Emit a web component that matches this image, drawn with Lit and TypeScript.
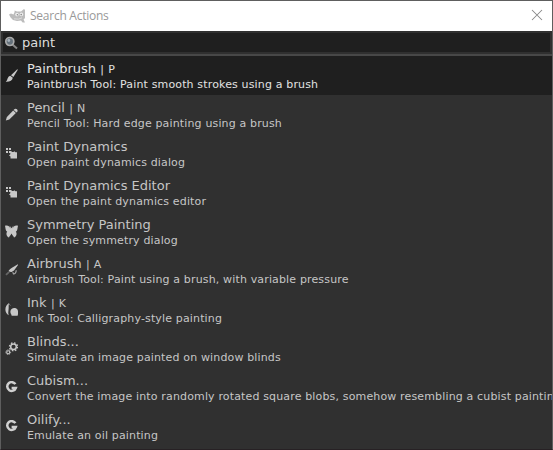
import { LitElement, html, css, svg } from "lit";
import { customElement } from "lit/decorators.js";

const icons: Record<string, unknown> = {
  brush: svg`<path d="M12.3 .2 L12.8 .8 L8.4 8 L6 6.2 Z"/><path d="M5.2 6.8 L7.8 8.8 C7.4 11.6 4.4 13 .8 12.7 C2.8 11.6 2.2 7.6 5.2 6.8Z"/>`,
  pencil: svg`<path d="M8.2 2.4 L10.9 5.1 L4.3 11.4 L.8 12.6 L1.9 9Z"/><path d="M9 1.6 C10.8 -.4 14 2 12 4.1 L11.5 4.6 L8.7 1.9Z"/>`,
  dynamics: svg`<path d="M1 1h2v2H1zM4 1h2v2H4zM1 4h2v2H1z"/><path d="M4 4 H6 L7.2 5 H8.5 L9.3 4.3 L10.4 5.2 H12 V11.5 H5.5 V9.4 L4 8.6 L5.3 7.2 V6 H4Z"/>`,
  butterfly: svg`<path d="M0 .8 C3-.1 5 1.8 5.7 4 L4.5.6 L6.5 3.2 L8.5.6 L7.3 4 C8 1.8 10-.1 13 .8 C12.4 3 12.7 5.8 10.8 6.8 C12.4 8.2 11.4 11.8 9 12.6 C8.6 11.2 7.4 10.5 6.5 8.6 C5.6 10.5 4.4 11.2 4 12.6 C1.6 11.8.6 8.2 2.2 6.8 C.3 5.8.6 3 0 .8Z"/>`,
  airbrush: svg`<path d="M12.8 .2 L13 1 L9 6.4 L6.6 8 L4.6 7.8 L3.6 6.8 C5.2 4.3 9 2.6 12.8 .2Z"/><path d="M4.2 7.8 L1 10.8" stroke="#666" stroke-width="1.8"/><path d="M11.2 6.2 C11.2 8.4 10 9.8 8.4 10 L7.8 8.2" fill="none" stroke="#aaa" stroke-width="1.1"/>`,
  ink: svg`<path d="M4.2 0 C3.4 2.4 3.8 3.6 3.6 6 C3.5 8.4 2.8 10 3.8 12.3 C-1 9.7 -.6 2.6 4.2 0Z"/><path d="M3.7 .3 L5.4 2.6" stroke="#888" stroke-width=".8"/><path d="M5.4 8.6 C5.6 4.6 11 4 12.7 7 C13.4 9 13 11.6 12.6 12.8 H6.6 C6.8 11.4 5.2 10.4 5.4 8.6Z"/>`,
  gears: svg`<circle cx="8.5" cy="4.8" r="2.8" fill="none" stroke="#c8c8c8" stroke-width="1.5"/><circle cx="8.5" cy="4.8" r="4" fill="none" stroke="#c8c8c8" stroke-width="1.4" stroke-dasharray="1.6 1.54"/><circle cx="3.2" cy="10.2" r="1.5" fill="none" stroke="#c8c8c8" stroke-width="1.1"/><circle cx="3.2" cy="10.2" r="2.4" fill="none" stroke="#c8c8c8" stroke-width=".9" stroke-dasharray="1 .88"/>`,
  gegl: svg`<path d="M10.4 3.2 A4.4 4.4 0 1 0 10.8 7 H6.6" fill="none" stroke="#d0d0d0" stroke-width="2.5"/>`,
};

interface Action { icon: string; name: string; key?: string; text: string }

const actions: Action[] = [
  { icon: "brush", name: "Paintbrush", key: "P", text: "Paintbrush Tool: Paint smooth strokes using a brush" },
  { icon: "pencil", name: "Pencil", key: "N", text: "Pencil Tool: Hard edge painting using a brush" },
  { icon: "dynamics", name: "Paint Dynamics", text: "Open paint dynamics dialog" },
  { icon: "dynamics", name: "Paint Dynamics Editor", text: "Open the paint dynamics editor" },
  { icon: "butterfly", name: "Symmetry Painting", text: "Open the symmetry dialog" },
  { icon: "airbrush", name: "Airbrush", key: "A", text: "Airbrush Tool: Paint using a brush, with variable pressure" },
  { icon: "ink", name: "Ink", key: "K", text: "Ink Tool: Calligraphy-style painting" },
  { icon: "gears", name: "Blinds...", text: "Simulate an image painted on window blinds" },
  { icon: "gegl", name: "Cubism...", text: "Convert the image into randomly rotated square blobs, somehow resembling a cubist painting" },
  { icon: "gegl", name: "Oilify...", text: "Emulate an oil painting" },
];

@customElement("app-root")
export class AppRoot extends LitElement {
  static styles = css`
    :host { display: block; box-sizing: border-box; width: 553px; height: 450px; overflow: hidden;
      border: 1px solid #5e5e5e; border-bottom-color: #272124; background: #303030;
      font-family: "DejaVu Sans", sans-serif; color: #c6c6c6; }
    .title { height: 30px; background: #fff; display: flex; align-items: center; padding: 0 9px 0 8px; }
    .wilber { width: 17px; height: 15px; }
    .caption { flex: 1; margin-left: 4px; font: 12px/16px "Open Sans", "Noto Sans", sans-serif; letter-spacing: -.25px; color: #999; }
    .close { width: 12px; height: 12px; margin-bottom: 2px; }
    .search { height: 19px; margin: 2px; background: #1f1f1f; display: flex; align-items: center; }
    .lens { width: 14px; height: 14px; margin-left: 1px; }
    .query { margin-left: 4px; font-size: 13px; line-height: 18px; color: #dedede; }
    .list { border-top: 2px solid #484848; }
    .row { height: 39px; display: flex; align-items: center; overflow: hidden; }
    .row.selected { background: #1f1f1f; color: #e2e2e2; }
    .icon { width: 13px; height: 13px; margin: 0 9px 0 4px; flex: none; fill: #c8c8c8; }
    .words { white-space: nowrap; }
    .name { font-size: 13px; line-height: 17px; height: 17px; }
    .key { font-size: 11px; letter-spacing: .3px; margin-left: .5px; }
    .text { font-size: 11px; line-height: 15px; height: 15px; margin-bottom: -1px; letter-spacing: .15px; }
  `;

  render() {
    return html`
      <div class="title">
        <svg class="wilber" viewBox="0 0 17 15">
          <path fill="#bcbcbc" d="M0 5.4 L2 4.4 L4.5 5.4 L5.6 3 V1.4 L8 2.6 L12 2.4 L15 0 L16 1 V9 L14.6 10.6 L16 13.4 L13.6 13.4 L12 11.6 L8 12 L4 11 L1.6 8.6Z"/>
          <circle cx="8" cy="5.6" r="1.8" fill="#eee"/><circle cx="12.4" cy="5.4" r="1.8" fill="#eee"/>
          <circle cx="8.4" cy="5.8" r=".8" fill="#888"/><circle cx="12.2" cy="5.6" r=".8" fill="#888"/>
          <path d="M5 9.8 Q10 11 13 8.8" fill="none" stroke="#e4e4e4" stroke-width=".8"/>
        </svg>
        <span class="caption">Search Actions</span>
        <svg class="close" viewBox="0 0 12 12"><path d="M1 1 L11 11 M11 1 L1 11" stroke="#888" stroke-width="1.05"/></svg>
      </div>
      <div class="search">
        <svg class="lens" viewBox="0 0 14 14">
          <path d="M8.5 8.5 L13 12.6" stroke="#858585" stroke-width="2"/>
          <circle cx="5.8" cy="5.5" r="4" fill="#65717b" stroke="#aaa" stroke-width="1.7"/>
          <circle cx="4.8" cy="4.5" r="1.4" fill="#a5b1bb"/>
        </svg>
        <span class="query">paint</span>
      </div>
      <div class="list">
        ${actions.map((a, i) => html`
          <div class="row ${i === 0 ? "selected" : ""}">
            <svg class="icon" viewBox="0 0 13 13">${icons[a.icon]}</svg>
            <div class="words">
              <div class="name">${a.name}${a.key ? html`<span class="key"> | ${a.key}</span>` : ""}</div>
              <div class="text">${a.text}</div>
            </div>
          </div>`)}
      </div>`;
  }
}
